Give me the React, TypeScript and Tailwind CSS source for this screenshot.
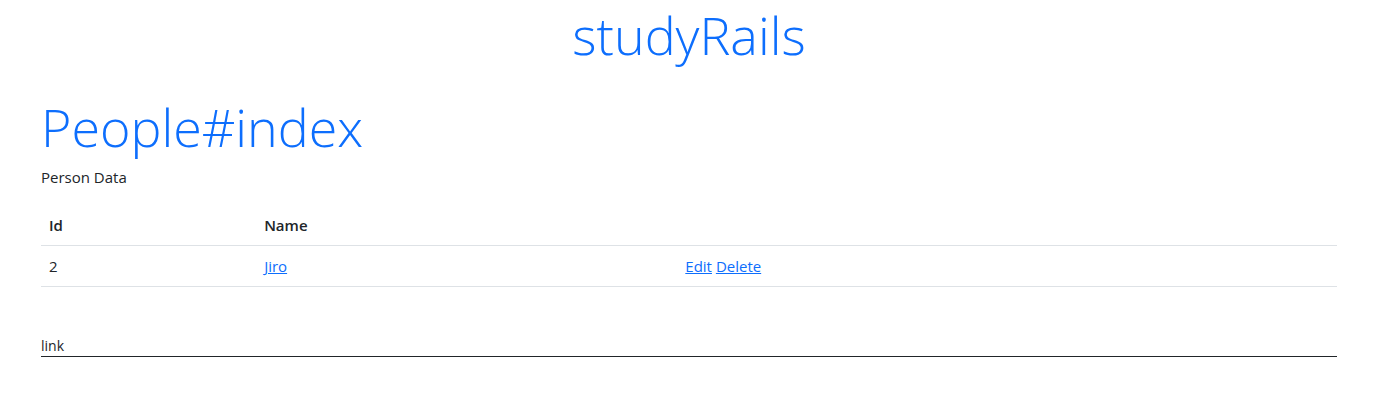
const people = [{ id: 2, name: "Jiro" }];

const link = "text-[#0d6efd] underline";

export default function App() {
  return (
    <div className="bg-white pr-[52px] pl-[41px] font-['Open_Sans','Noto_Sans',sans-serif] text-base leading-6 text-[#212529]">
      <header>
        <h1 className="pt-[3px] text-center text-[52px] leading-[64px] font-light text-[#0d6efd]">studyRails</h1>
      </header>
      <main className="pt-7">
        <h2 className="mb-1.5 text-[52px] leading-[64px] font-light text-[#0d6efd]">People#index</h2>
        <p className="mb-4 text-[15px] leading-6">Person Data</p>
        <table className="w-full table-fixed border-collapse text-left text-[15px] leading-6">
          <colgroup>
            <col className="w-[16.6%]" />
            <col className="w-[32.5%]" />
            <col />
          </colgroup>
          <thead>
            <tr className="border-b border-[#dee2e6]">
              <th className="p-2 font-semibold">Id</th>
              <th className="p-2 font-semibold">Name</th>
              <td className="p-2" />
            </tr>
          </thead>
          <tbody>
            {people.map((person) => (
              <tr key={person.id} className="border-b border-[#dee2e6]">
                <td className="p-2">{person.id}</td>
                <td className="p-2">
                  <a className={link} href={`#people-${person.id}`}>{person.name}</a>
                </td>
                <td className="p-2">
                  <a className={link} href={`#edit-${person.id}`}>Edit</a>{" "}
                  <a className={link} href={`#delete-${person.id}`}>Delete</a>
                </td>
              </tr>
            ))}
          </tbody>
        </table>
      </main>
      <footer className="mt-12 border-b border-[#212529] text-sm leading-[21px]">link</footer>
    </div>
  );
}
